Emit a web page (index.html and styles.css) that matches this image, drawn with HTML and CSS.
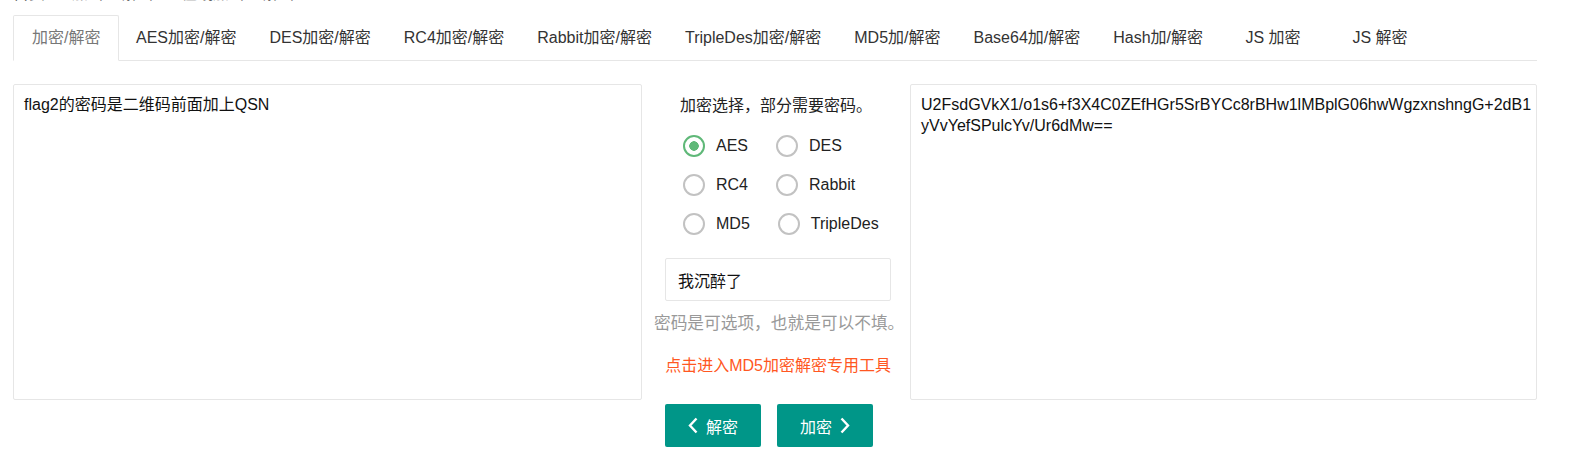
FILE: index.html
```html
<!DOCTYPE html>
<html lang="zh-CN">

<head>
    <meta charset="UTF-8">
    <title>在线加密解密</title>
    <link rel="stylesheet" href="styles.css">
</head>

<body>
    <div class="crumb">
        <span>首页</span><span class="sep">&gt;</span><span>加密</span><span class="sep small">/</span><span>解密</span><span class="sep">&gt;</span><span>在线加密</span><span class="sep small">/</span><span>解密</span>
    </div>

    <ul class="tabs">
        <li class="active">加密/解密</li>
        <li>AES加密/解密</li>
        <li>DES加密/解密</li>
        <li>RC4加密/解密</li>
        <li>Rabbit加密/解密</li>
        <li>TripleDes加密/解密</li>
        <li>MD5加/解密</li>
        <li>Base64加/解密</li>
        <li>Hash加/解密</li>
        <li>JS 加密</li>
        <li>JS 解密</li>
    </ul>

    <div class="panel">
        <textarea class="box box-left">flag2的密码是二维码前面加上QSN</textarea>

        <div class="middle">
            <p class="pick-title">加密选择，部分需要密码。</p>
            <div class="radios">
                <div class="radio-row">
                    <label class="radio checked"><i class="ring"></i><span>AES</span></label>
                    <label class="radio"><i class="ring"></i><span>DES</span></label>
                </div>
                <div class="radio-row">
                    <label class="radio"><i class="ring"></i><span>RC4</span></label>
                    <label class="radio"><i class="ring"></i><span>Rabbit</span></label>
                </div>
                <div class="radio-row">
                    <label class="radio"><i class="ring"></i><span>MD5</span></label>
                    <label class="radio"><i class="ring"></i><span>TripleDes</span></label>
                </div>
            </div>
            <input type="text" class="pwd" value="我沉醉了">
            <p class="hint">密码是可选项，也就是可以不填。</p>
            <p class="md5-link"><a href="#">点击进入MD5加密解密专用工具</a></p>
        </div>

        <textarea class="box box-right">U2FsdGVkX1/o1s6+f3X4C0ZEfHGr5SrBYCc8rBHw1lMBplG06hwWgzxnshngG+2dB1yVvYefSPulcYv/Ur6dMw==</textarea>
    </div>

    <div class="actions">
        <button class="btn">
            <svg width="10" height="17" viewBox="0 0 10 17"><polyline points="8.5,1.5 2,8.5 8.5,15.5" fill="none" stroke="#fff" stroke-width="2.4"/></svg>
            解密
        </button>
        <button class="btn">
            加密
            <svg width="10" height="17" viewBox="0 0 10 17"><polyline points="1.5,1.5 8,8.5 1.5,15.5" fill="none" stroke="#fff" stroke-width="2.4"/></svg>
        </button>
    </div>
</body>

</html>
```

FILE: styles.css
```css
body {
    font-family: "Liberation Sans", Arial, "Noto Sans CJK SC", sans-serif;
    font-size: 16px;
    margin: 0;
    padding: 0 46px 0 13px;
    background-color: #fff;
    color: #333;
}

.crumb {
    display: flex;
    height: 20px;
    line-height: 20px;
    margin-top: -16px;
    margin-bottom: 11px;
    color: #666;
}

.crumb .sep {
    width: 27px;
    text-align: center;
    color: #999;
}

.crumb .sep.small {
    width: 18px;
}

.tabs {
    display: flex;
    align-items: flex-start;
    list-style: none;
    margin: 0;
    padding: 0;
    height: 45px;
    border-bottom: 1px solid #e6e6e6;
}

.tabs li {
    min-width: 74px;
    height: 45px;
    line-height: 45px;
    padding: 0 16.5px;
    text-align: center;
    color: #333;
    white-space: nowrap;
    cursor: pointer;
}

.tabs li.active {
    box-sizing: border-box;
    height: 46px;
    line-height: 44px;
    padding: 0 18px;
    margin-bottom: -1px;
    border: 1px solid #e6e6e6;
    border-bottom-color: #fff;
    border-radius: 2px 2px 0 0;
    background-color: #fff;
    color: #777;
}

.panel {
    display: flex;
    margin-top: 23px;
}

.box {
    box-sizing: border-box;
    height: 316px;
    padding: 9px 10px;
    margin: 0;
    border: 1px solid #e6e6e6;
    border-radius: 2px;
    font-family: inherit;
    font-size: 16px;
    line-height: 21px;
    color: #111;
    resize: none;
    outline: none;
}

.box-left {
    width: 629px;
}

.box-right {
    width: 627px;
    padding-right: 4px;
    word-break: break-all;
}

.middle {
    width: 268px;
}

.middle p {
    margin: 0;
}

.pick-title {
    padding-top: 12px;
    line-height: 20px;
    text-align: center;
    color: #222;
}

.radios {
    margin-top: 10px;
    padding-left: 41px;
}

.radio-row {
    display: flex;
    align-items: center;
    height: 39px;
}

.radio {
    display: flex;
    align-items: center;
    margin-right: 28px;
    color: #222;
    cursor: pointer;
}

.ring {
    box-sizing: border-box;
    width: 22px;
    height: 22px;
    margin-right: 11px;
    border: 2px solid #c2c2c2;
    border-radius: 50%;
}

.radio.checked .ring {
    border-color: #5fb878;
    background: radial-gradient(circle, #5fb878 4.5px, transparent 5px);
}

.pwd {
    display: block;
    box-sizing: border-box;
    width: 226px;
    height: 43px;
    margin: 15px 0 0 23px;
    padding: 0 12px;
    border: 1px solid #e6e6e6;
    border-radius: 2px;
    font-family: inherit;
    font-size: 16px;
    color: #111;
    outline: none;
}

.hint {
    margin-top: 13px !important;
    padding-left: 12px;
    line-height: 20px;
    font-size: 16.7px;
    color: #999;
    white-space: nowrap;
}

.md5-link {
    margin-top: 22px !important;
    padding-right: 19px;
    line-height: 20px;
    text-align: right;
    white-space: nowrap;
}

.md5-link a {
    color: #ff5722;
    text-decoration: none;
}

.actions {
    display: flex;
    gap: 16px;
    margin-top: 4px;
    padding-left: 652px;
}

.btn {
    display: flex;
    align-items: center;
    justify-content: center;
    gap: 8px;
    width: 96px;
    height: 43px;
    padding: 0;
    border: none;
    border-radius: 2px;
    background-color: #009688;
    color: #fff;
    font-family: inherit;
    font-size: 16px;
    cursor: pointer;
}
```
